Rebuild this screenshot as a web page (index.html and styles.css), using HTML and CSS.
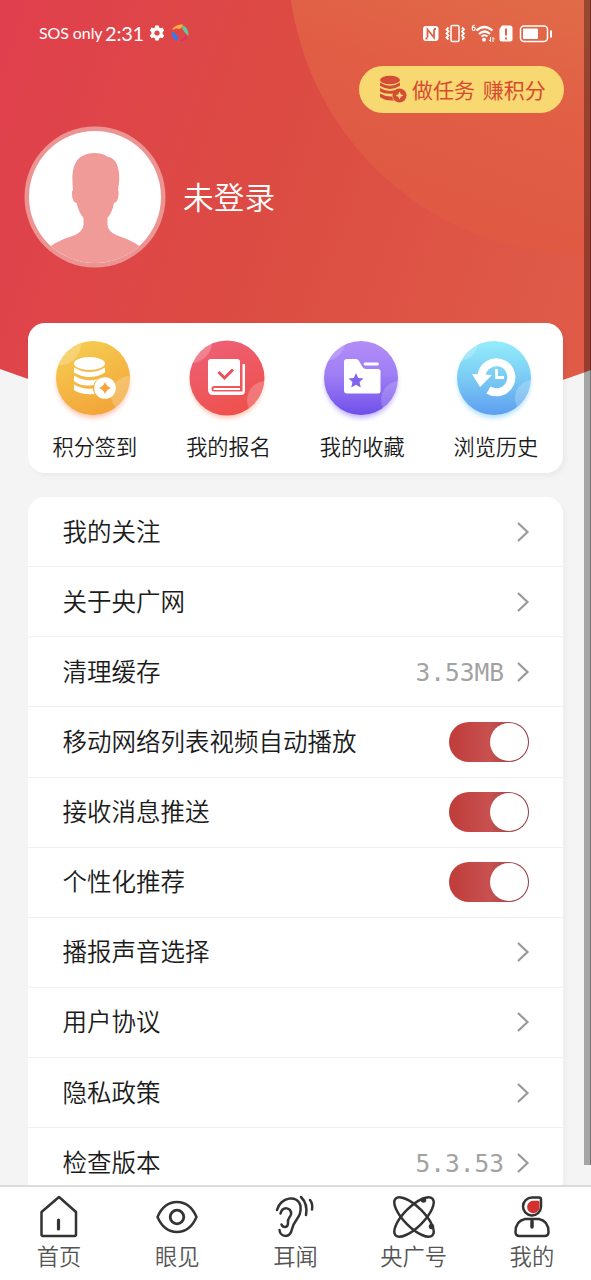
FILE: index.html
```html
<!DOCTYPE html>
<html lang="zh-CN">
<head>
<meta charset="utf-8">
<title>我的</title>
<link rel="stylesheet" href="styles.css">
</head>
<body>
<svg class="defs" width="0" height="0">
  <defs>
    <symbol id="chevron" viewBox="0 0 14 22"><path d="M2 2 11.500 11 2 20" fill="none" stroke="#999" stroke-width="2.200"/></symbol>
  </defs>
</svg>
<div class="screen">
  <svg class="backdrop" viewBox="0 0 591 450" width="591" height="450">
    <defs>
      <linearGradient id="hero" gradientUnits="userSpaceOnUse" x1="0" y1="60" x2="591" y2="260">
        <stop offset="0" stop-color="#e0404d"/><stop offset=".5" stop-color="#dc4c42"/><stop offset="1" stop-color="#df5b48"/>
      </linearGradient>
      <linearGradient id="orb" gradientUnits="userSpaceOnUse" x1="560" y1="0" x2="470" y2="250">
        <stop offset="0" stop-color="#e16a48"/><stop offset=".45" stop-color="#e15e45"/><stop offset="1" stop-color="#df5843"/>
      </linearGradient>
      <clipPath id="heroClip"><path d="M0 0H591V370Q295 480 0 369Z"/></clipPath>
    </defs>
    <g clip-path="url(#heroClip)">
      <rect width="591" height="450" fill="url(#hero)"/>
      <circle cx="585" cy="-42" r="297" fill="url(#orb)"/>
    </g>
  </svg>

  <main class="content">
    <header class="status">
      <div class="status-left">
        <span class="carrier">SOS only</span><span class="clock">2:31</span>
        <svg class="gear" width="16" height="16" viewBox="0 0 16 16"><path fill="#fff" fill-rule="evenodd" d="M6.300.5h3.400l.5 2.100 1.200.7 2.100-.7 1.700 2.900-1.600 1.500v1.900l1.600 1.500-1.700 2.900-2.100-.7-1.200.7-.5 2.200H6.300l-.5-2.200-1.200-.7-2.100.7-1.700-2.900 1.600-1.500V7L.8 5.500l1.700-2.900 2.100.7 1.200-.7zM8 5.400a2.600 2.600 0 1 0 0 5.200 2.600 2.600 0 0 0 0-5.200z"/></svg>
        <svg class="ball" width="18" height="18" viewBox="0 0 18 18">
          <path d="M1 6Q4 0 12 .5 12 3 8.500 5 5 3.500 1 6Z" fill="#ffae3e"/>
          <path d="M12 1.500Q18 4 17.500 12 14 9 11 4.500Z" fill="#62c9a0"/>
          <path d="M1 8Q5 8 7.500 15L5 17Q0 13 1 8Z" fill="#3779ea"/>
          <path d="M8.500 17Q12 16 14.500 11.500L16.500 13Q13 18 8.500 17Z" fill="#d92f6e"/>
        </svg>
      </div>
      <svg class="status-right" width="132" height="24" viewBox="422 21 132 24" fill="none" stroke="#fff" stroke-width="1.500">
        <rect x="423" y="26" width="15.500" height="15" rx="3" fill="#fff" stroke="none"/>
        <path d="M427.500 37.500V29.500L434 37.500V29.500M427.500 38.500h-2M434 29h2" stroke="#e16249" stroke-width="1.800"/>
        <rect x="451" y="25.500" width="8" height="16" rx="1.500"/>
        <path d="M448.500 27.500l-2 2 2 2-2 2 2 2-2 2 2 2M462 27.500l2 2-2 2 2 2-2 2 2 2-2 2" stroke-width="1.800"/>
        <path d="M475 25.200q-2.800-.2-2.800 3.200 0 2.100 1.500 2.100t1.500-1.700-1.500-1.600-1.500 1.200" stroke-width="1.100"/>
        <path d="M476.500 30.500q7.500-7 16 0M479 34q5.500-5 11 0" stroke-width="2.200"/><path d="M481.500 36.500q3-2.500 6 0" stroke-width="2"/>
        <circle cx="484" cy="39.700" r="1.900" fill="#fff" stroke="none"/>
        <path d="M490.500 37v4.500l-1.600-1.700M493 42v-4.500l1.600 1.700" stroke-width="1"/>
        <path d="M502 25.500h8q2.500 0 2.500 2.500v11q0 2.500-2.500 2.500h-8.500q-2 0-2-2.500V29z" fill="#fff" stroke="none"/>
        <path d="M506 28.500v7M506 37.500v2" stroke="#e16249" stroke-width="2"/>
        <rect x="520.500" y="26" width="27" height="15.500" rx="3.500"/>
        <rect x="523" y="28.500" width="15" height="10.500" rx="1" fill="#fff" stroke="none"/>
        <path d="M551 30.500v7" stroke-width="2"/>
      </svg>
    </header>

    <div class="task-line">
      <a class="task-pill">
        <svg width="28" height="28" viewBox="0 0 28 28">
          <g fill="#d34d36"><ellipse cx="11" cy="5" rx="10" ry="4.300"/>
          <path d="M1 7.500q10 6.500 20 0v3.200q-10 6.500-20 0zM1 13q8 5 17.500 1.500-3 1.500-4 4Q6 19.500 1 16.500zM1 18.500q6 3.500 12.300 3 .2 2.500 1.700 4Q6 26 1 22z"/>
          <circle cx="20.500" cy="20.500" r="7"/></g>
          <path d="M20.500 16.500l1.300 2.700 2.700 1.300-2.700 1.300-1.300 2.700-1.300-2.700-2.700-1.300 2.700-1.300z" fill="#f7d871"/>
        </svg>
        <span>做任务 赚积分</span>
      </a>
    </div>

    <section class="profile">
      <svg class="avatar" width="142" height="142" viewBox="0 0 142 142">
        <defs><clipPath id="face"><circle cx="71" cy="71" r="66"/></clipPath></defs>
        <circle cx="71" cy="71" r="70.500" fill="#ec9492"/>
        <circle cx="71" cy="71" r="66" fill="#fff"/>
        <path clip-path="url(#face)" fill="#f19b99" d="M49 64C47 44 49 28 70 27Q79 27 83 30.500C95 32 97 48 94 64Q95 65 94.500 69 94 76 90 77 88 87 83.500 92V99Q84 105 92 109 113 116 121 125V142H21V125Q29 116 51 109 59 105 59.500 99V92Q55 87 52.500 77 48.500 76 48 69 47.500 65 49 64Z"/>
      </svg>
      <h1 class="name">未登录</h1>
    </section>

    <section class="quick">
      <a class="quick-item">
        <svg width="90" height="86" viewBox="0 0 90 86">
          <defs><linearGradient id="g1" x1=".3" y1="0" x2=".7" y2="1"><stop stop-color="#f5cc50"/><stop offset="1" stop-color="#f3a339"/></linearGradient><clipPath id="c1"><circle cx="45" cy="40" r="37"/></clipPath></defs>
          <circle class="glow" cx="45" cy="44" r="36" fill="#fb9e78"/>
          <circle cx="45" cy="40" r="37" fill="url(#g1)"/>
          <g clip-path="url(#c1)" fill="#fff" fill-opacity=".22"><circle cx="12" cy="6" r="21"/><circle cx="82" cy="57" r="19"/></g>
          <g fill="#fff"><ellipse cx="41.500" cy="25.500" rx="15.500" ry="6.500"/>
          <path d="M26 29.500q15.500 9 31 0v5q-15.500 9-31 0zM26 37.500q13 8 27.500 2.500-7 2-8 7Q33 49 26 43zM26 46.500q8 5 18.500 4 .5 3 2.500 5.500Q32 57 26 52z"/>
          <circle cx="57" cy="50" r="10.800"/></g>
          <path d="M57 44q1.600 4.400 6 6-4.400 1.600-6 6-1.600-4.400-6-6 4.400-1.600 6-6z" fill="#f3a63d"/>
        </svg>
        <span>积分签到</span>
      </a>
      <a class="quick-item">
        <svg width="90" height="86" viewBox="0 0 90 86">
          <defs><linearGradient id="g2" x1=".3" y1="0" x2=".7" y2="1"><stop stop-color="#ed6075"/><stop offset="1" stop-color="#ef504b"/></linearGradient><clipPath id="c2"><circle cx="45" cy="40" r="37.500"/></clipPath></defs>
          <circle class="glow" cx="45" cy="44" r="36" fill="#ff9a78"/>
          <circle cx="45" cy="40" r="37.500" fill="url(#g2)"/>
          <g clip-path="url(#c2)" fill="#fff" fill-opacity=".22"><circle cx="9" cy="4" r="21"/><circle cx="84" cy="62" r="19"/></g>
          <path fill="#fff" fill-rule="evenodd" d="M29 21h26q3 0 3 3v24H32q-2.500 0-2.500 2.800T32 53.500h28.500V26H63v27q0 4-4 4H31q-5 0-5-6V24q0-3 3-3z"/><path d="M31.500 51H58" stroke="#fff" stroke-width="2"/>
          <path d="M36.500 34l6 6 8.500-8.500" fill="none" stroke="#e94f59" stroke-width="3"/>
        </svg>
        <span>我的报名</span>
      </a>
      <a class="quick-item">
        <svg width="90" height="86" viewBox="0 0 90 86">
          <defs><linearGradient id="g3" x1=".5" y1="0" x2=".5" y2="1"><stop stop-color="#b48cf6"/><stop offset=".45" stop-color="#9f7ff5"/><stop offset="1" stop-color="#6f50e9"/></linearGradient><clipPath id="c3"><circle cx="45" cy="40" r="37"/></clipPath></defs>
          <circle class="glow" cx="45" cy="44" r="36" fill="#967dff"/>
          <circle cx="45" cy="40" r="37" fill="url(#g3)"/>
          <g clip-path="url(#c3)" fill="#fff" fill-opacity=".18"><circle cx="9" cy="3" r="20"/><circle cx="84" cy="62" r="19"/></g>
          <path fill="#fff" d="M31 21h9q2 0 3 2l3.500 6Q48 31 50 31h12q2.500 0 2.500 2.500V53q0 2.500-2.500 2.500H31q-3 0-3-3V24q0-3 3-3z"/>
          <path d="M49 26h12.500" stroke="#fff" stroke-width="2.800" stroke-linecap="round"/>
          <path fill="#8265ee" d="M40 35l2.200 5 5.300.5-4 3.600 1.300 5.400-4.800-2.800-4.800 2.800 1.300-5.400-4-3.600 5.300-.5z"/>
        </svg>
        <span>我的收藏</span>
      </a>
      <a class="quick-item">
        <svg width="90" height="86" viewBox="0 0 90 86">
          <defs><linearGradient id="g4" x1=".5" y1="0" x2=".5" y2="1"><stop stop-color="#94edfb"/><stop offset=".5" stop-color="#7acbf4"/><stop offset="1" stop-color="#5e9eef"/></linearGradient><clipPath id="c4"><circle cx="45" cy="40" r="37"/></clipPath></defs>
          <circle class="glow" cx="45" cy="44" r="36" fill="#79cbff"/>
          <circle cx="45" cy="40" r="37" fill="url(#g4)"/>
          <g clip-path="url(#c4)" fill="#fff" fill-opacity=".22"><circle cx="10" cy="4" r="19"/><circle cx="84" cy="60" r="18"/></g>
          <path d="M32.500 37.500A15 15 0 1 1 39.500 52" fill="none" stroke="#fff" stroke-width="8"/>
          <path d="M23 36L43 37 31 49z" fill="#fff"/>
          <path d="M47.500 31v8.500h7.500" fill="none" stroke="#fff" stroke-width="2.800"/>
        </svg>
        <span>浏览历史</span>
      </a>
    </section>

    <section class="list">
      <div class="row"><span>我的关注</span><svg class="chev"><use href="#chevron"/></svg></div>
      <div class="row"><span>关于央广网</span><svg class="chev"><use href="#chevron"/></svg></div>
      <div class="row"><span>清理缓存</span><span class="value">3.53MB</span><svg class="chev"><use href="#chevron"/></svg></div>
      <div class="row"><span>移动网络列表视频自动播放</span><i class="toggle"></i></div>
      <div class="row"><span>接收消息推送</span><i class="toggle"></i></div>
      <div class="row"><span>个性化推荐</span><i class="toggle"></i></div>
      <div class="row"><span>播报声音选择</span><svg class="chev"><use href="#chevron"/></svg></div>
      <div class="row"><span>用户协议</span><svg class="chev"><use href="#chevron"/></svg></div>
      <div class="row"><span>隐私政策</span><svg class="chev"><use href="#chevron"/></svg></div>
      <div class="row"><span>检查版本</span><span class="value">5.3.53</span><svg class="chev"><use href="#chevron"/></svg></div>
    </section>
  </main>

  <nav class="tabs">
    <a class="tab">
      <svg viewBox="0 0 48 46"><path d="M24 4 41 19V41.500q0 1.500-1.500 1.500H8Q6.500 43 6.500 41.500V19Z"/><path d="M23.500 27v9" stroke-width="3.200"/></svg>
      <span>首页</span>
    </a>
    <a class="tab">
      <svg viewBox="0 0 48 46"><path d="M4.500 24Q11 9 24 9T43.500 24Q37 39 24 39T4.500 24Z"/><circle cx="24" cy="24" r="6.800" stroke-width="2.800"/></svg>
      <span>眼见</span>
    </a>
    <a class="tab">
      <svg viewBox="0 0 48 46"><path d="M6 17C9 4 27 1 29.500 13 31 25 23 26 21 36 19 46 9 44 8.500 37M9.500 20.500C11.500 13 21 14 20 21.500 19 25 16 25 17 30 17 35 12 35 10.500 31.500M30 4Q37 11 35 22M39 7Q42 11 41 16.500"/></svg>
      <span>耳闻</span>
    </a>
    <a class="tab">
      <svg viewBox="0 0 48 46"><ellipse cx="24" cy="24" rx="26" ry="10" transform="rotate(45 24 24)"/><ellipse cx="24" cy="24" rx="26" ry="10" transform="rotate(-45 24 24)"/><circle cx="33.500" cy="7" r="1.500" fill="#333"/><circle cx="41.500" cy="33.500" r="1.500" fill="#333"/></svg>
      <span>央广号</span>
    </a>
    <a class="tab">
      <svg viewBox="0 0 48 46"><path d="M24 4.500h7q2 0 2 2V14a9 9 0 1 1-9-9.500z"/><path d="M26 7.800h4q1.500 0 1.500 1.500v5.200a6.200 6.200 0 1 1-5.500-6.700z" fill="#d3312e" stroke="none"/><path d="M17 26h14q9.500 2 9.500 13 0 4-4 4h-25q-4 0-4-4 0-11 9.500-13z"/><path d="M24 28v6" stroke-width="3.500"/></svg>
      <span>我的</span>
    </a>
  </nav>
  <div class="scrollbar"></div>
</div>
</body>
</html>
```
FILE: styles.css
```css
* { box-sizing: border-box; }
body { margin: 0; font-family: "Noto Sans CJK SC", sans-serif; font-weight: 350; color: #1b1b1b; }
.defs { position: absolute; }
.screen {
  position: relative;
  width: 591px;
  height: 1280px;
  overflow: hidden;
  display: flex;
  flex-direction: column;
  background: #f4f4f4;
}
svg { display: block; flex: none; }
.backdrop { position: absolute; left: 0; top: 0; }
.content { position: relative; flex: 1; min-height: 0; overflow: hidden; padding: 0 28px; }

.status { display: flex; justify-content: space-between; align-items: center; height: 66px; padding: 0 9px 0 11px; color: #fff; }
.status-left { display: flex; align-items: center; font-family: Lato, sans-serif; font-weight: 400; line-height: 24px; }
.carrier { font-size: 16px; width: 66px; white-space: nowrap; letter-spacing: -.1px; }
.clock { font-size: 20px; width: 44px; letter-spacing: -.2px; }
.ball { margin-left: 6px; }

.task-line { display: flex; justify-content: flex-end; margin-right: -1px; }
.task-pill {
  display: flex;
  align-items: center;
  gap: 5px;
  width: 205px;
  height: 47px;
  padding: 0 0 2px 20px;
  border-radius: 24px;
  background: #f7d871;
  color: #d84b32;
  font-size: 21px;
  font-weight: 400;
  line-height: 30px;
  white-space: nowrap;
  word-spacing: 3px;
}

.profile { display: flex; align-items: center; gap: 17px; height: 142px; margin: 13px 0 0 -4px; }
.name { margin: 0; color: #fff; font-size: 30.700px; font-weight: 350; line-height: 44px; padding-bottom: 2px; }

.quick {
  display: grid;
  grid-template-columns: repeat(4, 133.700px);
  height: 150px;
  margin-top: 55px;
  padding-top: 15px;
  border-radius: 17px;
  background: #fff;
  box-shadow: 3px 3px 5px rgba(0, 0, 0, .04);
}
.quick-item { display: flex; flex-direction: column; align-items: center; font-size: 21.200px; line-height: 30px; }
.quick-item svg { margin-left: -3px; margin-bottom: 7px; }
.glow { opacity: .6; filter: blur(2.500px); }

.list { margin-top: 24px; border-radius: 17px; background: #fff; box-shadow: 4px 3px 4px rgba(0, 0, 0, .025); }
.row {
  display: flex;
  align-items: center;
  height: 70.140px;
  padding: 0 33px 0 34.500px;
  border-bottom: 1.500px solid #f0f0f0;
  font-size: 24.500px;
  line-height: 36px;
}
.row > :first-child { padding-bottom: 2px; }
.row > :nth-child(2) { margin-left: auto; }
.row > .value { padding-top: 2px; font-family: "DejaVu Sans Mono", monospace; font-weight: 400; color: #a2a2a2; }
.chev { width: 14px; height: 22px; }
.value + .chev { margin-left: 12px; }
.toggle {
  display: flex;
  justify-content: flex-end;
  width: 80px;
  height: 40px;
  margin-right: 1px;
  padding: 1px;
  border-radius: 20px;
  background: linear-gradient(90deg, #bf3c3a, #c85150 50%, #8d3940);
}
.toggle::before { content: ""; width: 38px; height: 38px; border-radius: 50%; background: #fff; }

.tabs {
  position: relative;
  display: grid;
  grid-template-columns: repeat(5, 1fr);
  height: 95px;
  border-top: 2px solid #dcdcdc;
  background: #fff;
}
.tab { display: flex; flex-direction: column; align-items: center; padding-top: 6px; color: #555; font-size: 22.300px; line-height: 32px; }
.tab svg { width: 48px; height: 46px; fill: none; stroke: #333; stroke-width: 2.500; stroke-linecap: round; stroke-linejoin: round; }
.scrollbar { position: absolute; right: 0; top: 0; width: 7px; height: 1165px; background: rgba(0, 0, 0, .32); border-right: 1px solid rgba(0, 0, 0, .3); }
```
